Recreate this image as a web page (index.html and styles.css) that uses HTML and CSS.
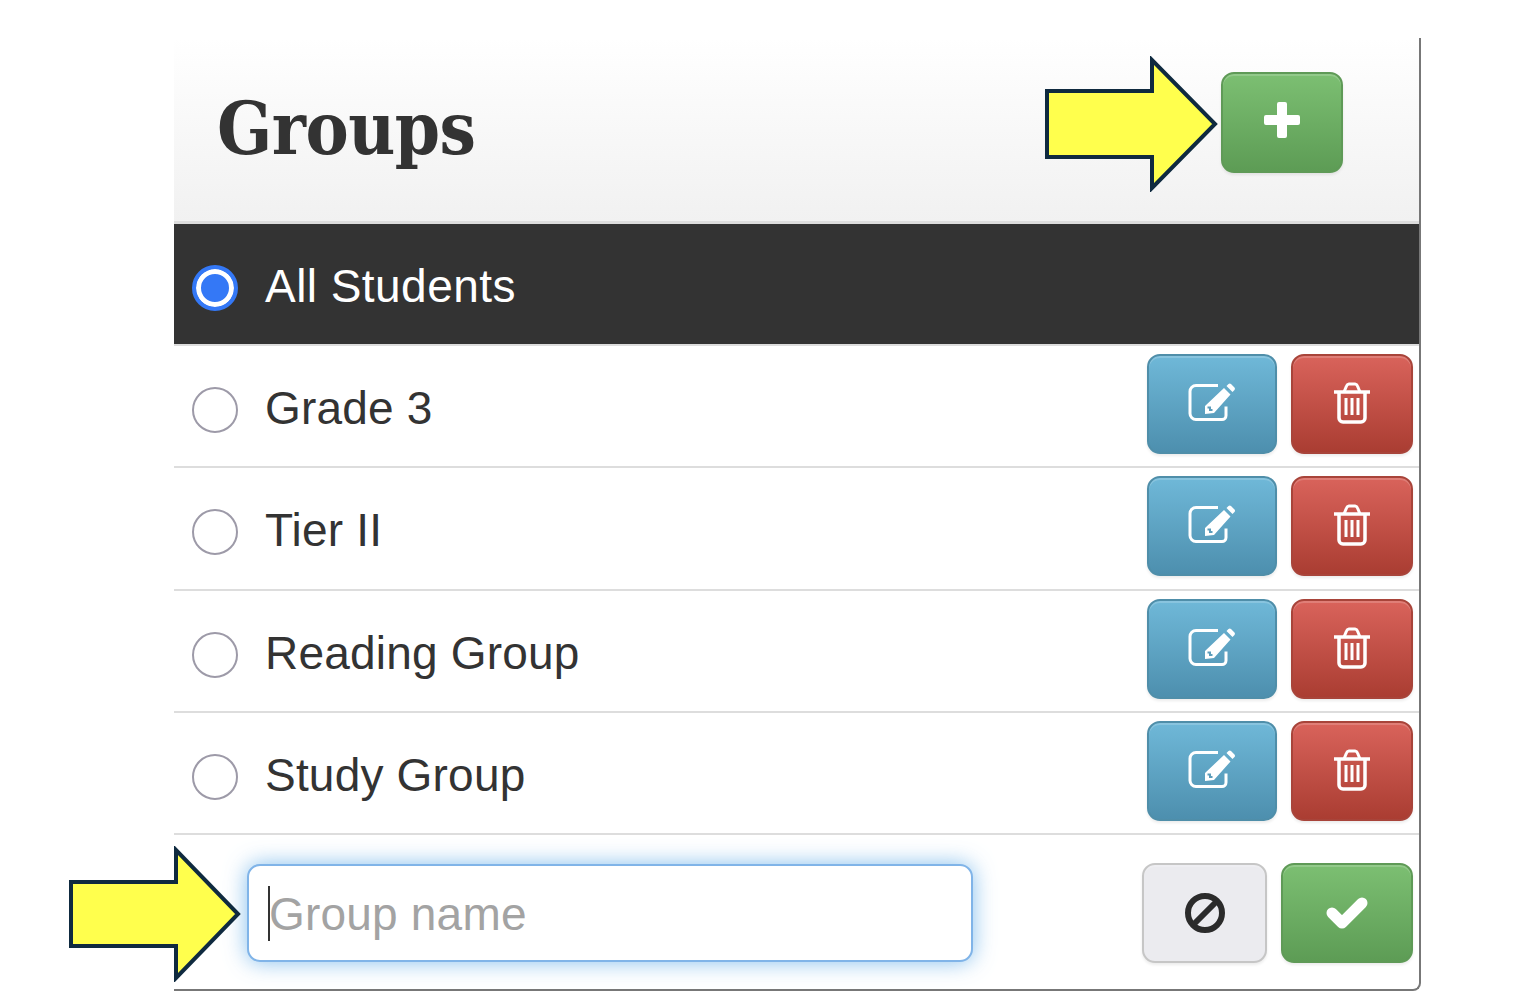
FILE: index.html
```html
<!DOCTYPE html>
<html lang="en">
<head>
<meta charset="UTF-8">
<title>Groups</title>
<link rel="stylesheet" href="styles.css">
</head>
<body>
    <div class="panel">
        <div class="panel_head">
            <h1>Groups</h1>
            <button class="btn btn_add btn_success" type="button">
                <svg width="38" height="38" viewBox="0 0 38 38"><path d="M14 3a2 2 0 0 1 2-2h6a2 2 0 0 1 2 2v11h11a2 2 0 0 1 2 2v6a2 2 0 0 1-2 2H24v11a2 2 0 0 1-2 2h-6a2 2 0 0 1-2-2V24H3a2 2 0 0 1-2-2v-6a2 2 0 0 1 2-2h11z" fill="#fff"/></svg>
            </button>
        </div>

        <div class="group_row group_active">
            <span class="radio radio_on"></span>
            <span class="group_name">All Students</span>
        </div>

        <div class="group_row">
            <span class="radio"></span>
            <span class="group_name">Grade 3</span>
            <div class="actions">
                <button class="btn btn_edit" type="button"><svg class="icon_edit" viewBox="0 0 50 42"><use href="#edit"/></svg></button>
                <button class="btn btn_delete" type="button"><svg class="icon_trash" viewBox="0 0 38 42"><use href="#trash"/></svg></button>
            </div>
        </div>
        <div class="group_row">
            <span class="radio"></span>
            <span class="group_name">Tier II</span>
            <div class="actions">
                <button class="btn btn_edit" type="button"><svg class="icon_edit" viewBox="0 0 50 42"><use href="#edit"/></svg></button>
                <button class="btn btn_delete" type="button"><svg class="icon_trash" viewBox="0 0 38 42"><use href="#trash"/></svg></button>
            </div>
        </div>
        <div class="group_row">
            <span class="radio"></span>
            <span class="group_name">Reading Group</span>
            <div class="actions">
                <button class="btn btn_edit" type="button"><svg class="icon_edit" viewBox="0 0 50 42"><use href="#edit"/></svg></button>
                <button class="btn btn_delete" type="button"><svg class="icon_trash" viewBox="0 0 38 42"><use href="#trash"/></svg></button>
            </div>
        </div>
        <div class="group_row">
            <span class="radio"></span>
            <span class="group_name">Study Group</span>
            <div class="actions">
                <button class="btn btn_edit" type="button"><svg class="icon_edit" viewBox="0 0 50 42"><use href="#edit"/></svg></button>
                <button class="btn btn_delete" type="button"><svg class="icon_trash" viewBox="0 0 38 42"><use href="#trash"/></svg></button>
            </div>
        </div>

        <div class="new_row">
            <div class="input_wrap">
                <input type="text" class="group_input" placeholder="Group name">
                <span class="caret"></span>
            </div>
            <div class="new_actions">
                <button class="btn btn_cancel" type="button">
                    <svg width="42" height="42" viewBox="0 0 42 42"><circle cx="21" cy="21" r="17" fill="none" stroke="#2b2b2b" stroke-width="6"/><path d="M9 33L33 9" stroke="#2b2b2b" stroke-width="6"/></svg>
                </button>
                <button class="btn btn_confirm btn_success" type="button">
                    <svg width="44" height="36" viewBox="0 0 44 36"><path d="M7 18l10 10L37 8" fill="none" stroke="#fff" stroke-width="11" stroke-linejoin="round" stroke-linecap="round"/></svg>
                </button>
            </div>
        </div>
    </div>

    <!-- callout arrows sit on top of the panel -->
    <svg class="arrow arrow_add" viewBox="0 0 174 136"><path d="M2 35H107V4L170 68L107 132V101H2Z"/></svg>
    <svg class="arrow arrow_input" viewBox="0 0 176 136"><path d="M2 36H107V4L169 68L107 132V100H2Z"/></svg>

    <!-- icon definitions -->
    <svg class="defs" width="0" height="0">
        <symbol id="edit" viewBox="0 0 50 42">
            <path d="M31 4.500H9a6 6 0 0 0-6 6v22a6 6 0 0 0 6 6h26a4 4 0 0 0 4-4v-9" fill="none" stroke="#fff" stroke-width="3"/>
            <path d="M39.500 5l2-2a2 2 0 0 1 2.500 0l3.500 3.500a2 2 0 0 1 0 2.500l-2 2zM37 7l6.500 6.500L27 32l-9 1V25z" fill="#fff"/>
            <path d="M20.500 26.500h2.500v2.500h2.500" fill="none" stroke="#5c9dbb" stroke-width="2"/>
        </symbol>
        <symbol id="trash" viewBox="0 0 38 42">
            <path d="M1 10H37" stroke="#fff" stroke-width="3.500" fill="none"/>
            <path d="M11 10l2.500-6a3 3 0 0 1 2.500-2h6a3 3 0 0 1 2.500 2L27 10" stroke="#fff" stroke-width="3" fill="none"/>
            <path d="M6 10V36a4 4 0 0 0 4 4H28a4 4 0 0 0 4-4V10" stroke="#fff" stroke-width="3.500" fill="none"/>
            <path d="M13 16V33M19 16V33M25 16V33" stroke="#fff" stroke-width="3" fill="none"/>
        </symbol>
    </svg>
</body>
</html>
```

FILE: styles.css
```css
*,
*::before,
*::after {
  box-sizing: border-box;
}
body {
    margin: 0;
    background: #fff;
    font-family: "Liberation Sans", Arial, sans-serif;
    color: #333;
}

.panel {
    width: 1247px;
    height: 953px;
    margin: 38px 0 0 174px;
    border-right: 2px solid #777;
    border-bottom: 2px solid #777;
    border-bottom-right-radius: 8px;
    overflow: hidden;
}
.panel_head {
    display: flex;
    justify-content: space-between;
    align-items: flex-start;
    height: 186px;
    padding: 34px 76px 0 43px;
    background: linear-gradient(#fff, #f1f1f1);
    border-bottom: 3px solid #ddd;
}
.panel_head h1 {
    margin: 4px 0 0;
    font-family: "DejaVu Serif Condensed", "DejaVu Serif", serif;
    font-size: 72px;
    line-height: 106px;
    font-weight: bold;
    letter-spacing: -.5px;
}

.group_row {
    display: flex;
    align-items: flex-start;
    height: 122.300px;
    padding: 8px 6px 0 18px;
    border-bottom: 2px solid #ddd;
}
.group_active {
    height: 122px;
    padding-top: 0;
    align-items: center;
    background: #333;
    background-clip: padding-box;
    color: #fff;
}
.radio {
    flex: none;
    width: 46px;
    height: 46px;
    margin-top: 33px;
    border: 2.500px solid #9d9aa8;
    border-radius: 50%;
    background: #fff;
}
.radio_on {
    margin-top: 8px;
    border: 4px solid #3478f6;
    background: #3478f6;
    box-shadow: inset 0 0 0 5px #fff;
}
.group_name {
    margin-left: 27px;
    font-size: 46px;
    line-height: 52px;
    padding-top: 28px;
    letter-spacing: .2px;
}
.group_active .group_name {
    padding-top: 3px;
    letter-spacing: .45px;
}
.actions {
    display: flex;
    gap: 14px;
    margin-left: auto;
}

.btn {
    display: flex;
    align-items: center;
    justify-content: center;
    height: 100px;
    padding: 0;
    border-radius: 13px;
    border: 2px solid transparent;
    box-shadow: inset 0 2px 0 rgba(255,255,255,.18), 0 2px 3px rgba(0,0,0,.08);
}
.btn_success {
    background: linear-gradient(#7cbf72, #5d9c55);
    border-color: #5f9a57;
}
.btn_add {
    width: 122px;
    height: 101px;
    padding-bottom: 5px;
}
.btn_edit {
    width: 130px;
    background: linear-gradient(#6fb8d8, #4d8fae);
    border-color: #4f8ea9;
    align-items: flex-start;
    padding-top: 25px;
}
.btn_delete {
    width: 122px;
    background: linear-gradient(#d9635b, #aa3d32);
    border-color: #a8443a;
    align-items: flex-start;
    padding-top: 26px;
}
.icon_edit {
    width: 50px;
    height: 42px;
}
.icon_trash {
    width: 38px;
    height: 42px;
}

.new_row {
    display: flex;
    align-items: flex-start;
    padding: 29px 6px 0 73px;
}
.input_wrap {
    position: relative;
}
.group_input {
    display: block;
    width: 726px;
    height: 98px;
    padding: 2px 20px 0;
    border: 2.500px solid #80b4e8;
    border-radius: 13px;
    outline: 0;
    font-family: inherit;
    font-size: 46px;
    letter-spacing: .2px;
    color: #333;
    box-shadow: 0 0 22px rgba(102,175,233,.8);
}
.group_input::placeholder {
    color: #a3a3a3;
    opacity: 1;
}
.caret {
    position: absolute;
    left: 21px;
    top: 22px;
    width: 2px;
    height: 55px;
    background: #333;
}
.new_actions {
    display: flex;
    gap: 14px;
    margin: -1px 0 0 auto;
}
.btn_cancel {
    width: 125px;
    background: #ebebef;
    border-color: #c6c6c6;
}
.btn_confirm {
    width: 132px;
}

.arrow {
    position: absolute;
}
.arrow path {
    fill: #ffff4d;
    stroke: #0f2a3f;
    stroke-width: 4;
}
.arrow_add {
    left: 1045px;
    top: 56px;
    width: 174px;
    height: 136px;
}
.arrow_input {
    left: 69px;
    top: 846px;
    width: 176px;
    height: 136px;
}
.defs {
    position: absolute;
}
```
